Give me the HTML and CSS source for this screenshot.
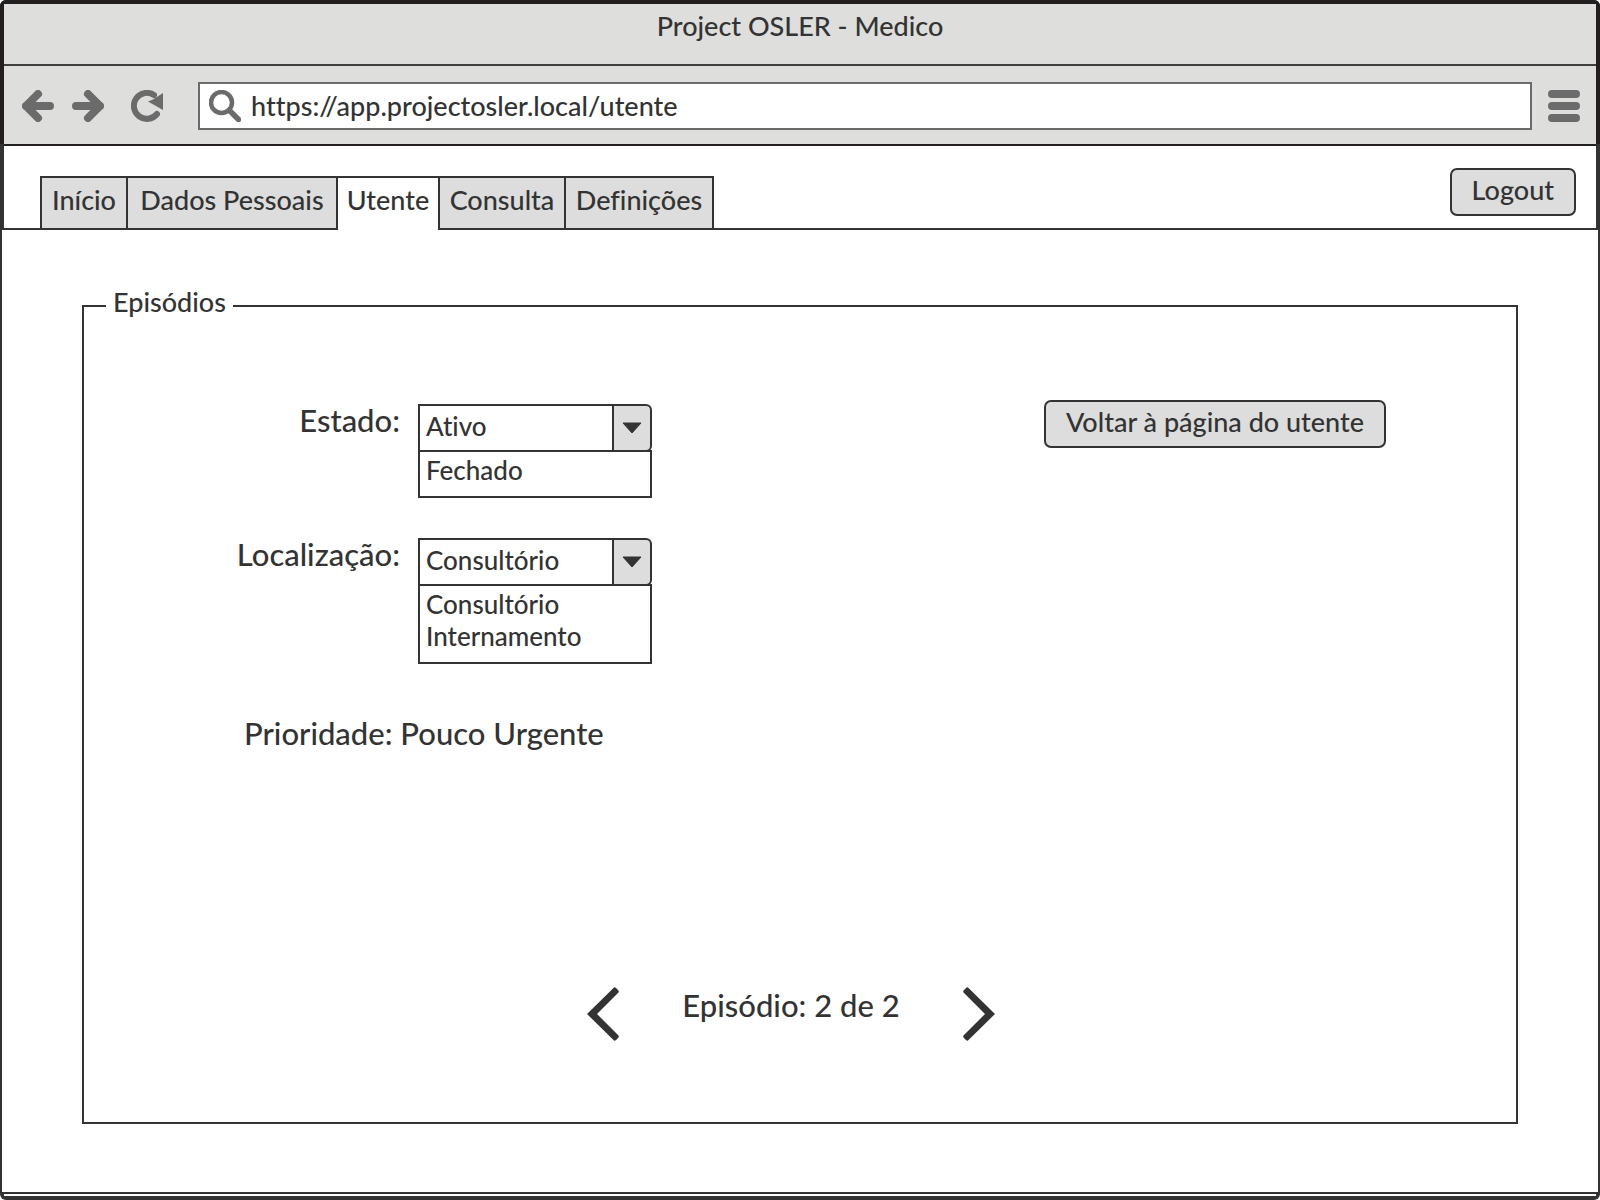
FILE: index.html
```html
<!DOCTYPE html>
<html lang="pt">
<head>
<meta charset="utf-8">
<meta name="viewport" content="width=device-width, initial-scale=1">
<title>Project OSLER - Medico</title>
<link rel="stylesheet" href="styles.css">
</head>
<body>
<div class="window">
  <header class="chrome">
    <h1 class="title">Project OSLER - Medico</h1>
    <div class="toolbar">
      <button class="icon-button" type="button" aria-label="Back">
        <svg width="32" height="32" viewBox="0 0 32 32"><path d="M16 4 4 16l12 12M4 16h24" fill="none" stroke="currentColor" stroke-width="8" stroke-linecap="round" stroke-linejoin="round"/></svg>
      </button>
      <button class="icon-button" type="button" aria-label="Forward">
        <svg width="32" height="32" viewBox="0 0 32 32"><path d="M16 4l12 12-12 12M28 16H4" fill="none" stroke="currentColor" stroke-width="8" stroke-linecap="round" stroke-linejoin="round"/></svg>
      </button>
      <button class="icon-button reload" type="button" aria-label="Reload">
        <svg width="32" height="32" viewBox="0 0 32 32"><path d="M26 24A13 13 0 1 1 23 5" fill="none" stroke="currentColor" stroke-width="6" stroke-linecap="round"/><path d="M32 3v17L17 11.500l5-2z" fill="currentColor"/></svg>
      </button>
      <label class="address">
        <svg width="32" height="32" viewBox="0 0 32 32" aria-hidden="true"><circle cx="12.500" cy="12.500" r="10.500" fill="none" stroke="currentColor" stroke-width="4.500"/><path d="M20.500 20.500l9 9" stroke="currentColor" stroke-width="5.500" stroke-linecap="round"/></svg>
        <input type="text" aria-label="Address" value="https://app.projectosler.local/utente">
      </label>
      <button class="icon-button menu" type="button" aria-label="Menu">
        <svg width="32" height="32" viewBox="0 0 32 32"><path d="M4 4h24M4 16h24M4 28h24" stroke="currentColor" stroke-width="8" stroke-linecap="round"/></svg>
      </button>
    </div>
    <div class="tabbar">
      <nav class="tabs">
        <a class="tab" href="#inicio">Início</a>
        <a class="tab" href="#dados">Dados Pessoais</a>
        <a class="tab active" href="#utente" aria-current="page">Utente</a>
        <a class="tab" href="#consulta">Consulta</a>
        <a class="tab" href="#definicoes">Definições</a>
      </nav>
      <button class="button" type="button">Logout</button>
    </div>
  </header>

  <main class="panel">
    <fieldset class="group">
      <legend>Episódios</legend>
      <div class="top">
        <div class="form">
          <label class="label" for="estado">Estado:</label>
          <div class="combo">
            <div class="face">
              <select id="estado"><option>Ativo</option><option>Fechado</option></select>
              <svg class="caret" width="20" height="12" viewBox="0 0 20 12" aria-hidden="true"><path d="M1 1h18l-9 10z" fill="currentColor" stroke="currentColor" stroke-linejoin="round"/></svg>
            </div>
            <ul class="options"><li>Fechado</li></ul>
          </div>
          <label class="label" for="local">Localização:</label>
          <div class="combo">
            <div class="face">
              <select id="local"><option>Consultório</option><option>Internamento</option></select>
              <svg class="caret" width="20" height="12" viewBox="0 0 20 12" aria-hidden="true"><path d="M1 1h18l-9 10z" fill="currentColor" stroke="currentColor" stroke-linejoin="round"/></svg>
            </div>
            <ul class="options"><li>Consultório</li><li>Internamento</li></ul>
          </div>
        </div>
        <button class="button" type="button">Voltar à página do utente</button>
      </div>
      <p class="priority">Prioridade: Pouco Urgente</p>
      <div class="pager">
        <button class="arrow" type="button" aria-label="Episódio anterior">
          <svg width="32" height="54" viewBox="0 0 32 54"><path d="M27 0.500Q28 0 29 1L31.500 3.500Q32 4.500 31.500 5.500L10 27l21.500 21.500Q32 49.500 31.500 50.500L29 53Q28 54 27 53.500L0 27z" fill="currentColor"/></svg>
        </button>
        <span>Episódio: 2 de 2</span>
        <button class="arrow" type="button" aria-label="Episódio seguinte">
          <svg width="32" height="54" viewBox="0 0 32 54"><path d="M5 0.500Q4 0 3 1L0.500 3.500Q0 4.500 0.500 5.500L22 27 0.500 48.500Q0 49.500 0.500 50.500L3 53Q4 54 5 53.500L32 27z" fill="currentColor"/></svg>
        </button>
      </div>
    </fieldset>
  </main>
  <div class="bottom-edge"></div>
</div>
</body>
</html>
```
FILE: styles.css
```css
* { box-sizing: border-box; }

body {
  margin: 0;
  color: #333;
  font: 500 27px/32px Lato, "Open Sans", sans-serif;
  font-variant-ligatures: none;
}

button, input, select {
  margin: 0;
  color: inherit;
  font: inherit;
  font-variant-ligatures: none;
}

svg { display: block; }

.window {
  display: flex;
  flex-direction: column;
  min-height: 100vh;
  padding: 4px 0;
  border-radius: 6px;
  background: #333;
  overflow: hidden;
}

.chrome {
  margin: 0 4px;
  background: #dededc;
  box-shadow: -4px -84px 0 #231f20, 4px -84px 0 #231f20;
}

.title {
  height: 62px;
  margin: 0;
  padding-top: 6px;
  border-bottom: 2px solid #404040;
  font: inherit;
  text-align: center;
}

.toolbar {
  display: flex;
  align-items: center;
  padding: 16px 16px 14px 18px;
  border-bottom: 2px solid #231f20;
  color: #6b6b6b;
}

.icon-button, .arrow {
  padding: 0;
  border: 0;
  background: none;
  color: inherit;
}

.icon-button + .icon-button { margin-left: 18px; }
.toolbar .reload { margin-left: 27px; }
.menu { margin-left: 16px; }

.address {
  display: flex;
  flex: 1;
  align-items: center;
  gap: 10px;
  height: 48px;
  margin-left: 35px;
  padding: 0 9px;
  border: 2px solid #6b6b6b;
  background: #fff;
}

.address input {
  flex: 1;
  min-width: 0;
  padding: 0;
  border: 0;
  outline: 0;
  background: none;
  color: #333;
}

.tabbar {
  display: flex;
  align-items: flex-start;
  justify-content: space-between;
  height: 82px;
  padding: 22px 20px 0 36px;
  background: #fff;
}

.tabs {
  display: grid;
  grid-template-columns: 86px 210px 102px 126px 150px;
  margin-top: 8px;
}

.tab {
  height: 52px;
  padding-top: 6px;
  border: 2px solid #333;
  border-width: 2px 0 0 2px;
  background: #ddd;
  color: inherit;
  text-align: center;
  text-decoration: none;
}

.tab:last-child { border-right-width: 2px; }

.tab.active {
  z-index: 1;
  height: 54px;
  background: #fff;
}

.button {
  height: 48px;
  padding: 0 20px 4px;
  border: 2px solid #333;
  border-radius: 7px;
  background: #ddd;
}

.panel {
  display: flex;
  flex: 1;
  flex-direction: column;
  margin: 2px 2px 0;
  padding: 56px 80px 68px;
  background: #fff;
}

.group {
  flex: 1;
  min-width: 0;
  margin: 0;
  padding: 74px 0 81px;
  border: 2px solid #333;
}

.group legend {
  margin-left: 22px;
  padding: 0 7px 8px;
}

.top {
  display: flex;
  align-items: flex-start;
  justify-content: space-between;
  padding-right: 130px;
}

.form {
  display: grid;
  grid-template-columns: 316px 234px;
  gap: 40px 18px;
  align-items: start;
  padding-top: 4px;
}

.label, .priority, .pager {
  font-size: 31px;
  line-height: 36px;
}

.label {
  margin-top: -2px;
  text-align: right;
}

.combo { font-size: 26px; }

.face { position: relative; }

.face select {
  display: block;
  width: 100%;
  height: 48px;
  padding: 0 40px 4px 6px;
  border: 2px solid #333;
  border-radius: 0 6px 6px 0;
  background: linear-gradient(#333, #333) right 36px top / 2px 100% no-repeat,
    linear-gradient(#ddd, #ddd) right top / 36px 100% no-repeat, #fff;
  appearance: none;
}

.caret {
  position: absolute;
  top: 18px;
  right: 10px;
  pointer-events: none;
}

.options {
  margin: -2px 0 0;
  padding: 2px 6px 10px;
  border: 2px solid #333;
  list-style: none;
}

.priority { margin: 51px 0 0 160px; }

.pager {
  display: flex;
  justify-content: center;
  gap: 63px;
  margin-top: 236px;
  padding-right: 18px;
}

.bottom-edge {
  height: 2px;
  margin: 2px 4px 0;
  background: #fff;
}
```
